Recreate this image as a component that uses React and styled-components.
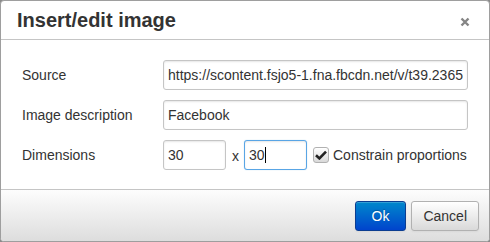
import React from 'react';
import styled, { createGlobalStyle } from 'styled-components';

const Global = createGlobalStyle`
  html, body {
    margin: 0;
    padding: 0;
    background: #8a8a8a;
  }
  * {
    box-sizing: border-box;
  }
`;

const Dialog = styled.div`
  width: 490px;
  height: 242px;
  display: flex;
  flex-direction: column;
  background: #fff;
  border: 1px solid #9e9e9e;
  border-radius: 4px;
  overflow: hidden;
  font-family: "Liberation Sans", Arial, sans-serif;
  color: #333;
`;

const Header = styled.div`
  height: 39px;
  flex: none;
  display: flex;
  align-items: center;
  justify-content: space-between;
  padding: 0 18px 0 16px;
  border-bottom: 1px solid #c5c5c5;
`;

const Title = styled.h1`
  margin: 0;
  font-size: 20px;
  font-weight: bold;
  color: #333;
  line-height: 20px;
`;

const Close = styled.button`
  border: 0;
  background: none;
  padding: 0;
  width: 12px;
  height: 12px;
  display: flex;
  align-items: center;
  justify-content: center;
  margin-top: 4px;
  cursor: pointer;
`;

const Body = styled.div`
  flex: 1;
  display: flex;
  flex-direction: column;
  gap: 10px;
  padding: 20px 20px 0 20px;
`;

const Row = styled.div`
  display: flex;
  align-items: center;
  height: 30px;
`;

const Label = styled.label`
  width: 142px;
  flex: none;
  font-size: 14px;
  padding-left: 1px;
  color: #333;
`;

const Field = styled.span`
  position: relative;
  display: inline-flex;

  &::after {
    content: ${p => (p.$caret ? "''" : 'none')};
    position: absolute;
    left: 21px;
    top: 7px;
    width: 1px;
    height: 16px;
    background: #000;
  }
`;

const Input = styled.input`
  height: 30px;
  width: ${p => (p.$small ? '63px' : '305px')};
  border: 1px solid ${p => (p.$focused ? '#59a5e5' : '#c5c5c5')};
  border-radius: 3px;
  padding: 0 4px;
  font-family: "Liberation Sans", Arial, sans-serif;
  font-size: 14px;
  color: #333;
  background: #fff;
  outline: none;
  box-shadow: ${p => (p.$focused ? 'inset 0 1px 2px rgba(0,0,0,0.1), 0 0 1px rgba(89,165,229,0.6)' : 'inset 0 1px 2px rgba(0,0,0,0.1)')};
  caret-color: transparent;
`;

const Times = styled.span`
  font-size: 14px;
  margin: 0 5px 0 6px;
  padding-top: 2px;
`;

const Check = styled.span`
  display: inline-flex;
  align-items: center;
  justify-content: center;
  width: 16px;
  height: 16px;
  margin: 0 4px 0 6px;
  border: 1px solid #b1b1b1;
  border-radius: 3px;
  background: linear-gradient(to bottom, #fff, #d9d9d9);
  box-shadow: inset 0 1px 0 rgba(255,255,255,0.6);
`;

const CheckText = styled.span`
  font-size: 14px;
  color: #333;
`;

const Footer = styled.div`
  height: 52px;
  flex: none;
  display: flex;
  align-items: center;
  justify-content: flex-end;
  gap: 5px;
  padding: 0 10px 0 0;
  border-top: 1px solid #c5c5c5;
  background: linear-gradient(to bottom, #fdfdfd, #dddddd);
`;

const Button = styled.button`
  height: 30px;
  padding: 0 ${p => (p.$primary ? '16px' : '11px')};
  border-radius: 3px;
  font-family: "Liberation Sans", Arial, sans-serif;
  font-size: 14px;
  cursor: pointer;
  color: ${p => (p.$primary ? '#fff' : '#333')};
  border: 1px solid ${p => (p.$primary ? '#0b3d91' : '#b1b1b1')};
  background: ${p =>
    p.$primary
      ? 'linear-gradient(to bottom, #0088cc, #0044cc)'
      : 'linear-gradient(to bottom, #ffffff, #d9d9d9)'};
  box-shadow: inset 0 1px 0 rgba(255,255,255,0.2), 0 1px 2px rgba(0,0,0,0.05);
  text-shadow: ${p => (p.$primary ? '0 -1px 1px rgba(0,0,0,0.25)' : 'none')};
`;

const App = () => {
  return (
    <>
      <Global />
      <Dialog>
        <Header>
          <Title>Insert/edit image</Title>
          <Close aria-label="Close">
            <svg width="10" height="10" viewBox="0 0 10 10">
              <path d="M1.5 1.5 L8.5 8.5 M8.5 1.5 L1.5 8.5" stroke="#858585" strokeWidth="2.4" strokeLinecap="butt" />
            </svg>
          </Close>
        </Header>
        <Body>
          <Row>
            <Label>Source</Label>
            <Input
              readOnly
              value="https://scontent.fsjo5-1.fna.fbcdn.net/v/t39.2365-6/facebook.png"
            />
          </Row>
          <Row>
            <Label>Image description</Label>
            <Input readOnly value="Facebook" />
          </Row>
          <Row>
            <Label>Dimensions</Label>
            <Input $small readOnly value="30" />
            <Times>x</Times>
            <Field $caret>
              <Input $small $focused readOnly value="30" />
            </Field>
            <Check>
              <svg width="12" height="10" viewBox="0 0 12 10">
                <path d="M1 5.2 L4.4 8.4 L11 1.6" fill="none" stroke="#222" strokeWidth="2.6" />
              </svg>
            </Check>
            <CheckText>Constrain proportions</CheckText>
          </Row>
        </Body>
        <Footer>
          <Button $primary>Ok</Button>
          <Button>Cancel</Button>
        </Footer>
      </Dialog>
    </>
  );
};

export default App;
